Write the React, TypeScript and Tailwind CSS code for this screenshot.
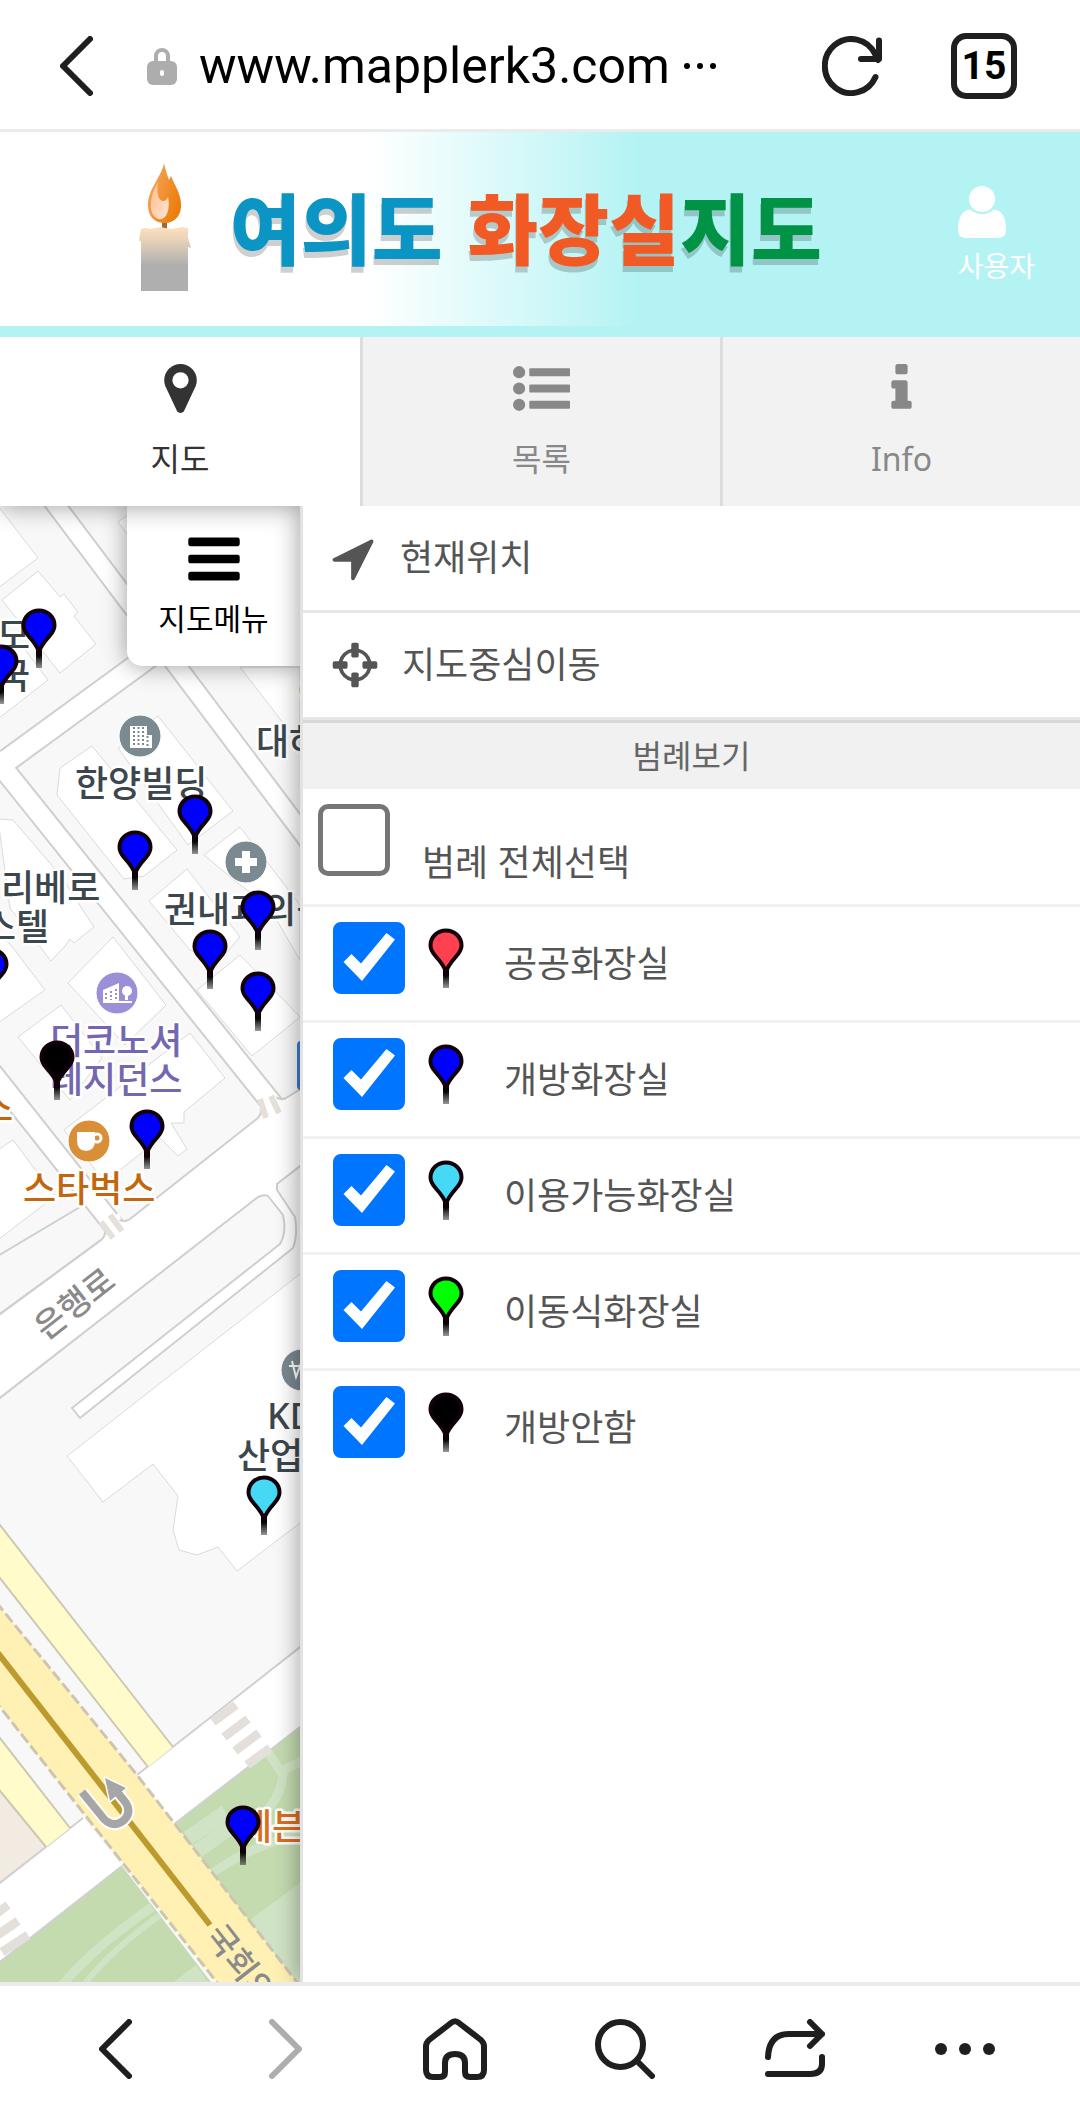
import { useState } from "react";
import type React from "react";

const legend: Array<{ id: string; label: string; color: string }> = [
	{ id: "public", label: "공공화장실", color: "#ff4050" },
	{ id: "open", label: "개방화장실", color: "#0000ff" },
	{ id: "available", label: "이용가능화장실", color: "#45d9f5" },
	{ id: "mobile", label: "이동식화장실", color: "#00ff00" },
	{ id: "closed", label: "개방안함", color: "#000000" },
];

// x is the middle of the pin, y its top edge
const pins: Array<{ x: number; y: number; color: string }> = [
	{ x: -9, y: 947, color: "#0000ff" },
	{ x: 39, y: 608, color: "#0000ff" },
	{ x: 1, y: 644, color: "#0000ff" },
	{ x: 195, y: 794, color: "#0000ff" },
	{ x: 135, y: 830, color: "#0000ff" },
	{ x: 258, y: 890, color: "#0000ff" },
	{ x: 210, y: 929, color: "#0000ff" },
	{ x: 258, y: 971, color: "#0000ff" },
	{ x: 57, y: 1040, color: "#000000" },
	{ x: 147, y: 1109, color: "#0000ff" },
	{ x: 264, y: 1475, color: "#45d9f5" },
	{ x: 243, y: 1805, color: "#0000ff" },
];

const icons = {
	marker:
		"M1152 640q0-106-75-181t-181-75-181 75-75 181 75 181 181 75 181-75 75-181zm256 0q0 109-33 179l-364 774q-16 33-47.5 52t-67.5 19-67.5-19-46.5-52l-365-774q-33-70-33-179 0-212 150-362t362-150 362 150 150 362z",
	list: "M384 1408q0 80-56 136t-136 56-136-56-56-136 56-136 136-56 136 56 56 136zm0-512q0 80-56 136t-136 56-136-56-56-136 56-136 136-56 136 56 56 136zm1408 416v192q0 13-9.5 22.5t-22.5 9.5h-1216q-13 0-22.5-9.5t-9.5-22.5v-192q0-13 9.5-22.5t22.5-9.5h1216q13 0 22.5 9.5t9.5 22.5zm-1408-928q0 80-56 136t-136 56-136-56-56-136 56-136 136-56 136 56 56 136zm1408 416v192q0 13-9.5 22.5t-22.5 9.5h-1216q-13 0-22.5-9.5t-9.5-22.5v-192q0-13 9.5-22.5t22.5-9.5h1216q13 0 22.5 9.5t9.5 22.5zm0-512v192q0 13-9.5 22.5t-22.5 9.5h-1216q-13 0-22.5-9.5t-9.5-22.5v-192q0-13 9.5-22.5t22.5-9.5h1216q13 0 22.5 9.5t9.5 22.5z",
	info: "M1216 1344v128q0 26-19 45t-45 19h-512q-26 0-45-19t-19-45v-128q0-26 19-45t45-19h64v-384h-64q-26 0-45-19t-19-45v-128q0-26 19-45t45-19h384q26 0 45 19t19 45v576h64q26 0 45 19t19 45zm-128-1152v192q0 26-19 45t-45 19h-256q-26 0-45-19t-19-45v-192q0-26 19-45t45-19h256q26 0 45 19t19 45z",
	bars: "M1664 1344v128q0 26-19 45t-45 19h-1408q-26 0-45-19t-19-45v-128q0-26 19-45t45-19h1408q26 0 45 19t19 45zm0-512v128q0 26-19 45t-45 19h-1408q-26 0-45-19t-19-45v-128q0-26 19-45t45-19h1408q26 0 45 19t19 45zm0-512v128q0 26-19 45t-45 19h-1408q-26 0-45-19t-19-45v-128q0-26 19-45t45-19h1408q26 0 45 19t19 45z",
	arrow:
		"M1593 349l-640 1280q-17 35-57 35-5 0-15-2-22-5-35.5-22.5t-13.5-39.5v-576h-576q-22 0-39.5-13.5t-22.5-35.5 4-42 29-30l1280-640q13-7 29-7 27 0 45 19 15 14 18.5 34.5t-6.5 39.5z",
	crosshairs:
		"M1325 1024h-109q-26 0-45-19t-19-45v-128q0-26 19-45t45-19h109q-32-108-112.5-188.5t-188.5-112.5v109q0 26-19 45t-45 19h-128q-26 0-45-19t-19-45v-109q-108 32-188.5 112.5t-112.5 188.5h109q26 0 45 19t19 45v128q0 26-19 45t-45 19h-109q32 108 112.5 188.5t188.5 112.5v-109q0-26 19-45t45-19h128q26 0 45 19t19 45v109q108-32 188.5-112.5t112.5-188.5zm339-192v128q0 26-19 45t-45 19h-143q-37 161-154.5 278.5t-278.5 154.5v143q0 26-19 45t-45 19h-128q-26 0-45-19t-19-45v-143q-161-37-278.5-154.5t-154.5-278.5h-143q-26 0-45-19t-19-45v-128q0-26 19-45t45-19h143q37-161 154.5-278.5t278.5-154.5v-143q0-26 19-45t45-19h128q26 0 45 19t19 45v143q161 37 278.5 154.5t154.5 278.5h143q26 0 45 19t19 45z",
};

function Glyph({ d, className }: { d: string; className: string }) {
	return (
		<svg viewBox="0 0 1792 1792" className={className} aria-hidden="true">
			<path fill="currentColor" d={d} />
		</svg>
	);
}

function Line({
	children,
	className,
	viewBox,
}: {
	children: React.ReactNode;
	className: string;
	viewBox: string;
}) {
	return (
		<svg
			viewBox={viewBox}
			className={className}
			fill="none"
			stroke="currentColor"
			strokeWidth="6"
			strokeLinecap="round"
			strokeLinejoin="round"
			aria-hidden="true"
		>
			{children}
		</svg>
	);
}

function PinShape({ color }: { color: string }) {
	return (
		<g>
			<path d="M15 38h6v22h-6z" fill="url(#pin-stick)" />
			<path
				d="M18 44C16.500 39 12 33 7.500 28C4 24 2.500 21 2.500 17.500C2.500 9 9.500 2.500 18 2.500S33.500 9 33.500 17.500C33.500 21 32 24 28.500 28C24 33 19.500 39 18 44Z"
				fill={color}
				stroke="#12000a"
				strokeWidth="4"
			/>
		</g>
	);
}

function Chevron({ flip, className }: { flip?: boolean; className: string }) {
	return (
		<Line viewBox="0 0 33 60" className={className}>
			<path d={flip ? "M3 3L30 30L3 57" : "M30 3L3 30L30 57"} />
		</Line>
	);
}

function BrowserBar() {
	return (
		<header className="flex h-[132px] shrink-0 items-center border-b-[3px] border-[#ebebeb] bg-white pl-[60px] pr-[63px] pt-[3px] text-[#1f1f1f]">
			<button type="button" aria-label="뒤로">
				<Chevron className="h-[60px] w-[33px]" />
			</button>
			<svg
				viewBox="0 0 30 40"
				className="ml-[54px] h-10 w-[30px] text-[#adadad]"
				aria-hidden="true"
			>
				<path
					d="M9 18V10a6 6 0 0 1 12 0v8"
					fill="none"
					stroke="currentColor"
					strokeWidth="4"
				/>
				<rect y="15" width="30" height="24" rx="6" fill="currentColor" />
				<rect x="13" y="24" width="4" height="6" rx="2" fill="#fff" />
			</svg>
			<span className="ml-[22px] font-[Roboto,sans-serif] text-[50px] leading-[60px] text-black">
				www.mapplerk3.com
			</span>
			<svg viewBox="0 0 32 6" className="ml-[14px] h-[6px] w-8" aria-hidden="true">
				<circle cx="3" cy="3" r="3" />
				<circle cx="16" cy="3" r="3" />
				<circle cx="29" cy="3" r="3" />
			</svg>
			<button type="button" aria-label="새로고침" className="ml-auto">
				<Line viewBox="0 0 60 60" className="size-[60px]">
					<path d="M53.500 41A26.500 27 0 1 1 53 18L56 24M57 4.500V23H39" />
				</Line>
			</button>
			<button
				type="button"
				aria-label="탭 15개"
				className="ml-[69px] flex size-[66px] items-center justify-center rounded-[15px] border-[6px] border-[#1f1f1f] font-[Roboto,sans-serif] text-[39px] font-bold leading-none text-black"
			>
				15
			</button>
		</header>
	);
}

function Candle() {
	return (
		<svg viewBox="139 162 52 130" className="h-[130px] w-[52px]" aria-hidden="true">
			<defs>
				<linearGradient id="flame" x1="0" x2="1" y1="0" y2="0.600">
					<stop offset="0" stopColor="#f4ac66" />
					<stop offset="1" stopColor="#ed7d0c" />
				</linearGradient>
				<linearGradient id="glow" x1="0" x2="1" y1="0" y2="1">
					<stop offset="0" stopColor="#ffbf8a" />
					<stop offset="1" stopColor="#ffe3d6" />
				</linearGradient>
				<linearGradient id="wax" x1="0" x2="0" y1="0" y2="1">
					<stop offset="0" stopColor="#fde0bf" />
					<stop offset="0.200" stopColor="#e8d2b8" />
					<stop offset="0.600" stopColor="#afafaf" />
					<stop offset="1" stopColor="#afafaf" />
				</linearGradient>
			</defs>
			<path d="M162 221h5v9h-5z" fill="#a5663a" />
			<path
				d="M164 163C162 176 148 189 148 205C148 217 155 223 165 223C175 223 182 215 181 203C180 192 175 186 171 176L169 180C167 174 165 169 164 163Z"
				fill="url(#flame)"
			/>
			<path
				d="M158 182C153 190 150 200 151 209C152 216 157 220 162 219C168 217 170 206 168 197C166 202 161 202 159 198C157 194 157 188 158 182Z"
				fill="url(#glow)"
			/>
			<path
				d="M141 229L145 228L150 229L160 227L165 228L172 229L182 227L188 228V238L191 248L188 247V291H141V242L139 240Z"
				fill="url(#wax)"
			/>
		</svg>
	);
}

function Banner() {
	return (
		<div className="flex h-[205px] shrink-0 items-center border-b-[11px] border-[#b4f3f4] bg-linear-to-r from-white from-34% to-[#b4f3f4] to-59% pb-1 pl-[139px] pr-[45px]">
			<Candle />
			<h1 className="ml-[39px] flex gap-[25px] whitespace-nowrap pt-1 text-[77px] font-black leading-none [text-shadow:-1px_6px_0_rgb(0_0_0/0.19)]">
				<span className="text-[#0b95c4]">여의도</span>
				<span className="text-[#f15a24]">
					화장실<span className="text-[#009245]">지도</span>
				</span>
			</h1>
			<button
				type="button"
				className="ml-auto flex flex-col items-start gap-[10px] pt-4 text-[28px] leading-9 text-white"
			>
				<svg viewBox="0 0 48 52" className="h-[52px] w-12" aria-hidden="true">
					<circle cx="24" cy="13" r="13" fill="currentColor" />
					<path
						d="M12 23.500Q24 33 36 23.500Q48 25 48 44Q48 52 40 52H8Q0 52 0 44Q0 25 12 23.500Z"
						fill="currentColor"
					/>
				</svg>
				사용자
			</button>
		</div>
	);
}

function Tabs() {
	const tab =
		"flex flex-col items-center gap-[22px] border-l-[3px] border-[#dddddd] bg-[#f2f2f2] pt-[23px] text-[32px] leading-10 text-[#888888]";
	return (
		<nav className="relative z-10 grid h-[169px] shrink-0 grid-cols-3 bg-white shadow-[0_0_24px_rgb(0_0_0/0.4)] [clip-path:inset(0_0_-40px_0)]">
			<button
				type="button"
				className="flex flex-col items-center gap-[22px] pt-[23px] text-[32px] leading-10 text-[#333333]"
			>
				<Glyph d={icons.marker} className="size-[57px]" />
				지도
			</button>
			<button type="button" className={tab}>
				<Glyph d={icons.list} className="size-[57px]" />
				목록
			</button>
			<button type="button" className={tab}>
				<Glyph d={icons.info} className="size-[57px]" />
				Info
			</button>
		</nav>
	);
}

function Roads() {
	return (
		<>
			<rect y="500" width="1080" height="1490" fill="#f8f8f8" />
			<g fill="#fff" stroke="#dadada" strokeWidth="1">
				<path d="M-2 506L38 558L-2 588Z" />
				<path d="M2 600L38 571L60 597L64 594L78 612L74 616L96 644L60 673Z" />
				<path d="M-2 625L25 650L48 680L-2 719Z" />
				<path d="M118 522L140 506H170V590Z" />
				<path d="M240 667L300 745V667Z" />
				<path d="M60 768L92 746L177 850L144 876L124 879L57 795Z" />
				<path d="M118 748L158 716L233 811L188 845Z" />
				<path d="M204 855L240 827L300 905V960L268 905L240 885Z" />
				<path d="M-2 819L13 820L60 875L94 927L74 943L70 939L66 945L51 961L10 908Z" />
				<path d="M-2 935L10 944L45 990L-2 1023Z" />
				<path d="M68 983L113 937L166 1005L125 1045Z" />
				<path d="M18 1037L61 1005L102 1058L70 1100Z" />
				<path d="M149 901L187 869L240 937L220 960L190 950Z" />
				<path d="M197 990L240 955L300 1017L252 1056Z" />
				<path d="M64 1130L190 1033L225 1078L184 1112L184 1123L171 1123L187 1149L178 1156L160 1138L105 1182Z" />
				<path d="M-2 1150L13 1140L55 1196L-2 1240Z" />
				<path d="M300 1274L67 1456L103 1502L153 1464L178 1496L173 1530L179 1550L197 1555L218 1547L237 1571L304 1520V1274Z" />
			</g>
			<g fill="none" strokeLinejoin="round">
				<path d="M52 500L310 843" stroke="#cfcfcf" strokeWidth="21" />
				<path d="M-20 780L165 645" stroke="#cfcfcf" strokeWidth="25" />
				<path d="M-6 757L278 1111" stroke="#cfcfcf" strokeWidth="23" />
				<path d="M-20 1057L125 1240" stroke="#cfcfcf" strokeWidth="22" />
				<path d="M52 500L310 843" stroke="#fff" strokeWidth="17" />
				<path d="M-20 780L165 645" stroke="#fff" strokeWidth="21" />
				<path d="M-6 757L278 1111" stroke="#fff" strokeWidth="19" />
				<path d="M-20 1057L125 1240" stroke="#fff" strokeWidth="18" />
			</g>
			<g stroke="#cfcfcf" strokeWidth="2" fill="#fff" strokeLinejoin="round">
				<path
					d="M-4 1317L101 1240Q107 1235 104 1228L118 1219Q124 1223 130 1219L258 1118Q263 1113 260 1107L274 1096Q280 1101 286 1098L304 1087V1163L277 1184V1190L295 1217Q298 1235 293 1248L80 1418L72 1408L280 1244Q287 1232 283 1215L268 1196Q264 1194 258 1197L-4 1401Z"
				/>
				<path d="M-4 1317L101 1240M-4 1257L80 1207" />
			</g>
			<path d="M107 1228L121 1219L119 1213L103 1222ZM262 1112L277 1098L274 1093L258 1107Z" fill="#fff" />
			<path
				d="M101 1222l12 16M110 1215l12 16M260 1099l6 19M271 1096l8 17"
				stroke="#e5e0d9"
				strokeWidth="6"
			/>
		</>
	);
}

function Boulevard() {
	return (
		<>
			<path d="M0 1790L46 1847L0 1883Z" fill="#f2ebe2" />
			<path d="M0 1962L122 1866L217 1990H0Z" fill="#c4dbb0" />
			<path d="M304 1724L173 1825L300 1990H304Z" fill="#c4dbb0" />
			<g stroke="#d1e3c5" fill="none" strokeWidth="9">
				<path d="M58 1990Q90 1950 152 1907" />
				<path d="M80 1990Q105 1955 160 1915" strokeWidth="6" />
				<path d="M188 1838L226 1812M196 1852L232 1826" strokeWidth="15" />
				<path d="M208 1876Q250 1845 300 1835M268 1752L283 1775Q280 1800 262 1815M283 1770L304 1760" />
			</g>
			<path d="M250 1920L304 1880V1990H300ZM170 1985L196 1965L210 1985Z" fill="#d1e3c5" />
			<path d="M304 1644L137 1775L173 1825L304 1724ZM-4 1886L83 1818L122 1866L-4 1965Z" fill="#fff" />
			<path
				d="M304 1644L137 1775M304 1724L173 1825M-4 1886L83 1818M-4 1965L122 1866"
				stroke="#d0d0d0"
				strokeWidth="2"
			/>
			<path d="M-4 1520L173 1747L148 1767L-4 1573Z" fill="#fffbcb" />
			<path d="M-4 1733L70 1828L46 1847L-4 1786Z" fill="#fffbcb" />
			<path
				d="M-4 1520L173 1747M-4 1573L148 1767M-4 1733L70 1828M-4 1786L46 1847"
				stroke="#cdc8b4"
				strokeWidth="2"
			/>
			<path d="M-4 1602L137 1775L303 1990H223L122 1862L-4 1702Z" fill="#fff0b4" />
			<path
				d="M-4 1602L137 1775L303 1990M223 1990L122 1862L-4 1702"
				stroke="#cdc5b0"
				strokeWidth="3"
				strokeDasharray="11 4"
				fill="none"
			/>
			<path d="M-2 1653L210 1925" stroke="#bd9a2e" strokeWidth="6" />
			<path
				d="M213 1722L236 1705M224 1737L248 1719M235 1751L259 1733M247 1765L270 1748M-4 1914L8 1905M-4 1936L18 1921M2 1952L28 1935"
				stroke="#e3e0dc"
				strokeWidth="9"
			/>
			<g fill="none" strokeLinejoin="round">
				<path d="M82 1792L104 1819Q113 1828 123 1821Q132 1813 126 1803L118 1793" stroke="#fff" strokeWidth="12" />
				<path d="M105 1778L126 1788L110 1801Z" fill="#a6a6a6" stroke="#fff" strokeWidth="3" />
				<path d="M82 1792L104 1819Q113 1828 123 1821Q132 1813 126 1803L118 1793" stroke="#a6a6a6" strokeWidth="8" />
				<path d="M105 1778L126 1788L110 1801Z" fill="#a6a6a6" />
			</g>
		</>
	);
}

function Places() {
	return (
		<>
			<g stroke="#fff" strokeWidth="1">
				<circle cx="140" cy="736" r="21" fill="#7b8990" />
				<circle cx="246" cy="862" r="21" fill="#7b8990" />
				<circle cx="302" cy="1370" r="21" fill="#7b8990" />
				<circle cx="117" cy="993" r="21" fill="#9b8fd8" />
				<circle cx="89" cy="1141" r="21" fill="#d98f38" />
			</g>
			<path d="M130 726h17v9h5v13h-22z" fill="#fff" />
			<path
				d="M134 727v20M138.500 727v20M143 727v20M147.500 736v11"
				stroke="#7b8990"
				strokeWidth="2"
				strokeDasharray="2 2"
			/>
			<path d="M242 851h8v7h7v8h-7v7h-8v-7h-7v-8h7z" fill="#fff" />
			<path d="M103 990L119 983V1001H103ZM125 1000h3v-8h-3zM103 1001h29v2h-29z" fill="#fff" />
			<circle cx="127" cy="991" r="5" fill="#fff" />
			<path d="M106 993v7M111 991v9M116 989v11" stroke="#9b8fd8" strokeWidth="2" strokeDasharray="2 2" />
			<path d="M77 1132H95V1140Q95 1151 86 1151Q77 1151 77 1140Z" fill="#fff" />
			<circle cx="97" cy="1138" r="4" fill="none" stroke="#fff" strokeWidth="3" />
			<path d="M289 1366h16M292 1361l4 16 4-11 4 11" stroke="#fff" strokeWidth="2" fill="none" />
			<rect x="297" y="1041" width="30" height="49" rx="4" fill="#3d7cc9" />
			<g
				fontSize="36"
				fontWeight="500"
				fill="#3c474d"
				stroke="#fff"
				strokeWidth="5"
				strokeLinejoin="round"
				paintOrder="stroke"
			>
				<text x="-3" y="649">모</text>
				<text x="-3" y="689">국</text>
				<text x="75" y="797">한양빌딩</text>
				<text x="256" y="755">대하</text>
				<text x="1" y="901">리베로</text>
				<text x="-17" y="940">스텔</text>
				<text x="164" y="923">권내과의원</text>
				<text x="267" y="1429">KDB</text>
				<text x="237" y="1469">산업은행</text>
				<text x="297" y="706">이</text>
				<g fill="#7467b2">
					<text x="50" y="1054">더코노셔</text>
					<text x="50" y="1093">레지던스</text>
				</g>
				<g fill="#c4660c">
					<text x="23" y="1202">스타벅스</text>
					<text x="-20" y="1121">스</text>
				</g>
				<text x="239" y="1840" fill="#d96f1e">세븐</text>
			</g>
			<g fontSize="33" fontWeight="500" fill="#8a8a8a">
				<text transform="translate(46 1341) rotate(-38)">은행로</text>
				<text transform="translate(204 1936) rotate(52)">국회의</text>
			</g>
		</>
	);
}

function MapView() {
	return (
		<section className="relative overflow-hidden" aria-label="지도">
			<svg
				viewBox="0 506 300 1476"
				preserveAspectRatio="xMinYMin slice"
				className="absolute inset-0 size-full"
			>
				<title>여의도</title>
				<defs>
					<linearGradient id="pin-stick" x1="0" x2="0" y1="0" y2="1">
						<stop offset="0.400" stopColor="#000" />
						<stop offset="1" stopColor="#000" stopOpacity="0.400" />
					</linearGradient>
				</defs>
				<Roads />
				<Boulevard />
				<Places />
				{pins.map((pin) => (
					<g key={`${pin.x}-${pin.y}`} transform={`translate(${pin.x - 18} ${pin.y})`}>
						<PinShape color={pin.color} />
					</g>
				))}
			</svg>
			<button
				type="button"
				className="absolute right-0 top-0 flex h-40 w-[173px] flex-col items-center gap-[10px] rounded-bl-[15px] bg-white pt-[23px] text-[30px] leading-10 text-black shadow-[0_0_24px_rgb(0_0_0/0.4)]"
			>
				<Glyph d={icons.bars} className="size-[60px]" />
				지도메뉴
			</button>
		</section>
	);
}

function Panel() {
	const [checked, setChecked] = useState(legend.map((item) => item.id));
	const [all, setAll] = useState(false);

	const toggle = (id: string) =>
		setChecked((ids) => (ids.includes(id) ? ids.filter((i) => i !== id) : [...ids, id]));

	const toggleAll = () => {
		setChecked(all ? [] : legend.map((item) => item.id));
		setAll(!all);
	};

	return (
		<aside className="relative z-20 border-l-[3px] border-[#e2e2e2] bg-white text-[36px] leading-[48px] text-[#555555] shadow-[0_0_24px_rgb(0_0_0/0.4)] [clip-path:inset(0_0_0_-40px)]">
			<button
				type="button"
				className="flex h-[107px] w-full items-center gap-[21px] border-b-[3px] border-[#e6e6e6] pl-6"
			>
				<Glyph d={icons.arrow} className="size-[52px]" />
				현재위치
			</button>
			<button
				type="button"
				className="flex h-[107px] w-full items-center gap-[21px] border-b-[3px] border-[#e6e6e6] pl-[26px]"
			>
				<Glyph d={icons.crosshairs} className="size-[52px]" />
				지도중심이동
			</button>
			<h2 className="h-[69px] border-t-[3px] border-[#d8d8d8] bg-[#f1f1f1] text-center text-[32px] leading-[66px] text-[#666666]">
				범례보기
			</h2>
			<label className="flex h-[118px] items-start gap-8 border-b-[3px] border-[#f1f1f1] pl-[15px] pt-[15px]">
				<input
					type="checkbox"
					checked={all}
					onChange={toggleAll}
					className="size-[72px] appearance-none rounded-[10px] border-[5px] border-[#767676] bg-white checked:border-[#0075ff] checked:bg-[#0075ff]"
				/>
				<span className="pt-[35px]">범례 전체선택</span>
			</label>
			<ul>
				{legend.map((item) => (
					<li key={item.id} className="border-b-[3px] border-[#f1f1f1] last:border-b-0">
						<label className="flex h-[113px] items-center pl-[30px]">
							<span className="grid self-start pt-[15px]">
								<input
									type="checkbox"
									checked={checked.includes(item.id)}
									onChange={() => toggle(item.id)}
									className="peer col-start-1 row-start-1 size-[72px] appearance-none rounded-[8px] border-[5px] border-[#767676] bg-white checked:border-[#0075ff] checked:bg-[#0075ff]"
								/>
								<svg
									viewBox="0 0 72 72"
									className="pointer-events-none invisible col-start-1 row-start-1 size-[72px] peer-checked:visible"
									aria-hidden="true"
								>
									<path d="M10.500 40L18.500 32L28 41.500L53.500 11L62 17.500L29 59Z" fill="#fff" />
								</svg>
							</span>
							<svg
								viewBox="0 0 36 60"
								className="ml-[23px] mr-10 mt-[21px] h-[60px] w-9 self-start"
								aria-hidden="true"
							>
								<PinShape color={item.color} />
							</svg>
							{item.label}
						</label>
					</li>
				))}
			</ul>
		</aside>
	);
}

function BottomBar() {
	return (
		<footer className="grid h-[133px] shrink-0 grid-cols-6 items-center justify-items-center border-t-[4px] border-[#ebebeb] bg-white px-[30px] pb-[3px] text-[#1f1f1f]">
			<button type="button" aria-label="이전">
				<Chevron className="h-[60px] w-[33px]" />
			</button>
			<button type="button" aria-label="다음" className="text-[#adadad]">
				<Chevron flip className="h-[60px] w-[33px]" />
			</button>
			<button type="button" aria-label="홈">
				<Line viewBox="0 0 64 62" className="h-[62px] w-16">
					<path d="M28 5Q32 1.500 36 5L58 22Q61 25 61 28V52Q61 59 54 59H47Q42 59 42 54V45Q42 36 32 36T22 45V54Q22 59 17 59H10Q3 59 3 52V28Q3 25 6 22Z" />
				</Line>
			</button>
			<button type="button" aria-label="검색">
				<Line viewBox="0 0 60 60" className="size-[60px]">
					<circle cx="25.500" cy="25.500" r="22.500" />
					<path d="M43 43L57 57" />
				</Line>
			</button>
			<button type="button" aria-label="공유">
				<Line viewBox="0 0 60 60" className="size-[60px]">
					<path d="M3 38Q4 15 24 15H57M45 3L57 15L45 27M57 38V45Q57 55 45 55H3" />
				</Line>
			</button>
			<button type="button" aria-label="더보기">
				<svg viewBox="0 0 60 12" className="h-3 w-[60px]" fill="currentColor" aria-hidden="true">
					<circle cx="6" cy="6" r="6" />
					<circle cx="30" cy="6" r="6" />
					<circle cx="54" cy="6" r="6" />
				</svg>
			</button>
		</footer>
	);
}

export default function App() {
	return (
		<div className="flex min-h-screen flex-col bg-white font-['Noto_Sans','Noto_Sans_CJK_KR',sans-serif]">
			<BrowserBar />
			<Banner />
			<Tabs />
			<main className="grid flex-1 grid-cols-[5fr_13fr]">
				<MapView />
				<Panel />
			</main>
			<BottomBar />
		</div>
	);
}
